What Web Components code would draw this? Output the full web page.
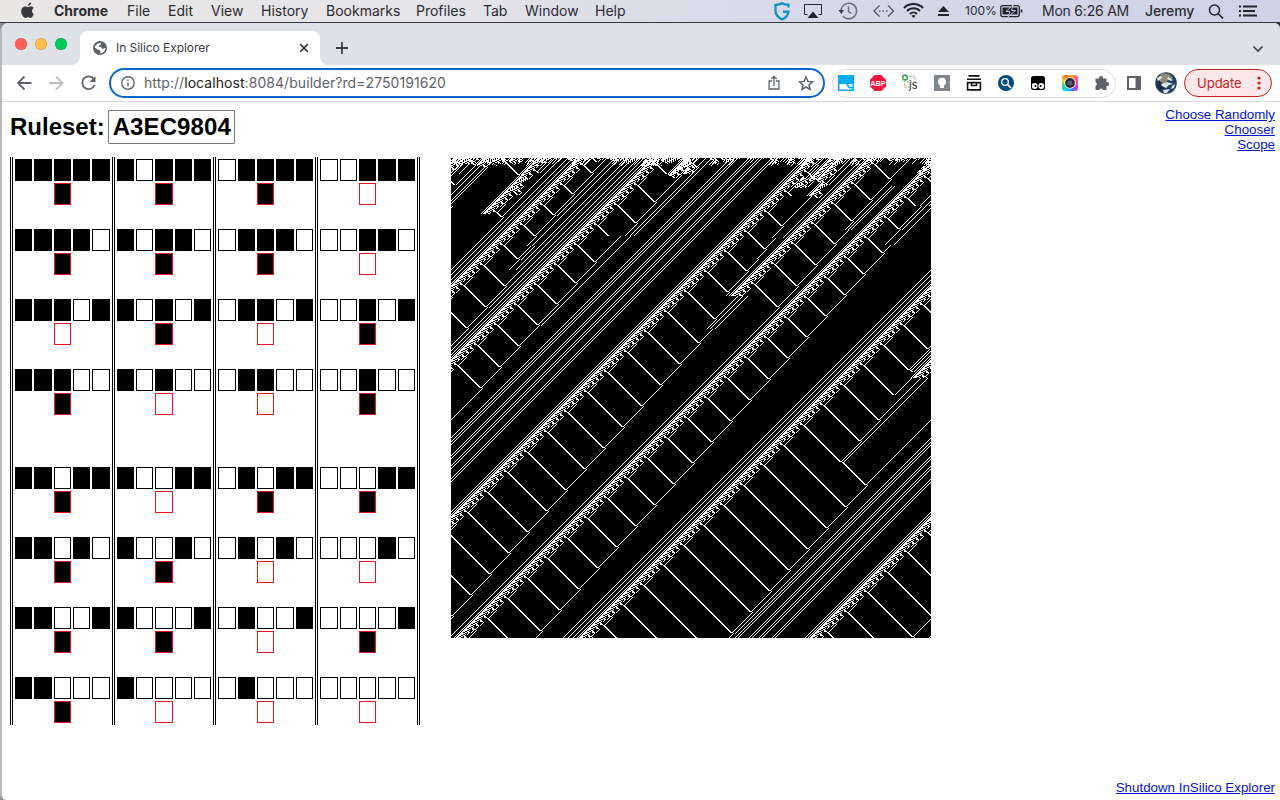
<!DOCTYPE html>
<html lang="en">
<head>
<meta charset="utf-8">
<title>In Silico Explorer</title>
<style>
html,body{margin:0;height:100%;overflow:hidden;background:#fff}
</style>
</head>
<body>
<desk-top></desk-top>
<script>
const define = (name, html, init) => {
  const tpl = document.createElement('template');
  tpl.innerHTML = html;
  customElements.define(name, class extends HTMLElement {
    constructor() {
      super();
      this.attachShadow({ mode: 'open' }).append(tpl.content.cloneNode(true));
    }
    connectedCallback() { if (init && !this.ready) { this.ready = true; init(this, this.shadowRoot); } }
  });
};

/* ---------- five-neighbour cellular automaton ---------- */
const RULE = 0xA3EC9804, SIZE = 480;
const mod = (a, n) => ((a % n) + n) % n;
const step = a => {
  const n = a.length, b = new Uint8Array(n);
  for (let i = 0; i < n; i++) {
    const v = a[(i + n - 2) % n] << 4 | a[(i + n - 1) % n] << 3 | a[i] << 2 | a[(i + 1) % n] << 1 | a[(i + 2) % n];
    b[i] = (RULE >>> v) & 1;
  }
  return b;
};

define('menu-bar', `
<style>
:host{display:flex;box-sizing:border-box;height:23px;padding-left:20px;border-bottom:1px solid #33343c;
 background:linear-gradient(90deg,#e9e7e6,#e4e3e7 35%,#d8d9e9 60%,#cdd2e6);font:14px/22px Inter,sans-serif;color:#2b2b33;white-space:nowrap}
span{display:block;flex:none}
svg{display:block;flex:none}
b{font-weight:700}
</style>
<svg width="34" height="22" viewBox="0 0 34 22"><path fill="#38383d" d="M11.2 2.600c.1 1.700-1.400 3.300-3.100 3.300-.2-1.600 1.400-3.200 3.100-3.300zM13.800 14c-.5 1.500-2 3.900-3.300 3.900-1 0-1.400-.6-2.500-.6s-1.500.6-2.400.6C3.600 17.900 1.200 14.400 1.200 11.200c0-3 1.900-4.700 3.800-4.700 1.200 0 2 .7 2.900.7.800 0 1.800-.8 3.200-.7.800 0 2 .4 2.700 1.500-2.600 1.600-2.100 4.900 0 6z"/></svg>
<span style="width:73px"><b>Chrome</b></span><span style="width:41px">File</span><span style="width:43px">Edit</span><span style="width:50px">View</span><span style="width:65px">History</span><span style="width:90px">Bookmarks</span><span style="width:67px">Profiles</span><span style="width:42px">Tab</span><span style="width:70px">Window</span><span style="width:178px">Help</span>
<svg width="507" height="22" viewBox="773 0 507 22" fill="none" stroke="#23242c" style="margin-right:-507px">
 <path d="M788.500 7.500V5q-4-.3-6.500-1.800Q779.500 4.700 775.500 5v6c0 4 3 6.500 6.500 8.500 3.500-1.800 6.300-4 6.500-7.800h-5.500" stroke="#1492c4" stroke-width="2.400"/>
 <path d="M807.500 14.500h-3v-10h17v10h-3"/><path fill="#23242c" stroke="none" d="M813 11.500l5.500 6.500h-11z"/>
 <g stroke="#6b6e7b" stroke-width="1.500"><path d="M841 11a7.800 7.800 0 1 1 1.800 5"/><path d="M848.500 6.500v5l3 2"/></g><path fill="#3b3d48" stroke="none" d="M838.500 10h5.500l-2.700 4z"/>
 <g stroke="#555865" stroke-width="1.300"><path d="M879.500 5.500l-5.500 5.500 5.500 5.500M888 5.500l5.500 5.500-5.500 5.500"/><path stroke-dasharray="1.500 2" d="M879 11h10"/></g>
 <g stroke-width="2"><path d="M904 8a13.500 13.500 0 0 1 19 0M907 11a9 9 0 0 1 13 0M910 14a5 5 0 0 1 7 0"/></g><path fill="#23242c" stroke="none" d="M913.500 18l-2-2.200a3 3 0 0 1 4 0z"/>
 <path fill="#23242c" stroke="none" d="M943.500 6l5.500 6h-11zM938 14h11v2h-11z"/>
 <rect x="1000.800" y="5.600" width="18.500" height="11" rx="2" stroke-width="1.300"/><rect x="1002.500" y="7.500" width="15" height="7" fill="#23242c" stroke="none"/><path d="M1021.500 9.500v3" stroke-width="1.600"/><path d="M1013 5l-7 6.500h4l-2 5.500 7.500-6.500h-4z" fill="#23242c" stroke="#d0d4e6" stroke-width=".9"/>
 <circle cx="1214.500" cy="10" r="5" stroke-width="1.500"/><path d="M1218 13.500l5 5" stroke-width="1.700"/>
 <path d="M1243 6.500h14M1243 11h12M1243 15.500h14" stroke-width="2"/><path d="M1239 6.500h2M1239 11h2M1239 15.500h2" stroke-width="2"/>
</svg>
<span style="width:77px;margin-left:192px;font-size:12px">100%</span><span style="width:103px;letter-spacing:-.22px">Mon 6:26 AM</span><span style="font-weight:500;letter-spacing:-.1px">Jeremy</span>
`);

define('tab-strip', `
<style>
:host{display:flex;box-sizing:border-box;height:42px;padding:8px 16px 0 13px;background:#dee1e6;font:12px/34px Inter,sans-serif;color:#3c4043}
i{display:block;flex:none;width:12px;height:12px;border-radius:50%;margin:7px 8px 0 0;box-shadow:inset 0 0 0 .5px #0003}
.tab{display:flex;align-items:center;position:relative;width:240px;height:34px;margin-left:5px;border-radius:8px 8px 0 0;background:#fff;flex:none}
.tab::before,.tab::after{content:"";position:absolute;bottom:0;width:8px;height:8px}
.tab::before{left:-8px;background:radial-gradient(circle at 0 0,#0000 7.500px,#fff 8px)}
.tab::after{right:-8px;background:radial-gradient(circle at 100% 0,#0000 7.500px,#fff 8px)}
.tab span{width:181px;letter-spacing:-.05px}
svg{display:block;flex:none}
.tab svg:first-child{margin:0 9px 0 13px}
</style>
<i style="background:#ff5f57"></i><i style="background:#ffbd4c"></i><i style="background:#00ca56"></i>
<div class="tab"><svg width="14" height="14" viewBox="0 0 14 14"><circle cx="7" cy="7" r="7" fill="#5f6368"/><path d="M6.500 2.200c2.500-.8 1.500 1.600 0 2-1.500.3-.5 1.700 1 1.700 1.300 0 1 2 2.300 1.900.9 0 1-1 2.700-.8-.2 3-2.800 5.300-5.200 5.400-.6-1.200.7-1.700-.3-2.800-1-1-2.600-.7-3.600-1.900L1.700 6.500C2 4.200 4 2.500 6.500 2.200z" fill="#fff"/></svg><span>In Silico Explorer</span><svg width="14" height="14" viewBox="0 0 14 14"><path d="M3.200 3.200l7.600 7.600M10.800 3.200l-7.600 7.600" stroke="#3c4043" stroke-width="1.700"/></svg></div>
<svg width="14" height="14" viewBox="0 0 14 14" style="margin:10px 0 0 15px"><path d="M7 1v12M1 7h12" stroke="#3c4043" stroke-width="1.800"/></svg>
<svg width="12" height="12" viewBox="0 0 12 12" style="margin:12px 0 0 auto"><path d="M1.500 3.500L6 8l4.500-4.500" fill="none" stroke="#3c4043" stroke-width="1.600"/></svg>
`);

define('tool-bar', `
<style>
:host{display:flex;box-sizing:border-box;height:37px;align-items:center;border-bottom:1px solid #d5d7da;background:#fff;font:14px/26px Inter,sans-serif;color:#5f6368;padding:0 8px 0 14px}
svg{display:block;flex:none}
.omni{display:flex;align-items:center;box-sizing:border-box;width:716px;height:30px;border:2px solid #0b66cf;border-radius:15px;margin-left:11px;flex:none;padding:0 8px 0 10px}
.omni span{flex:1;margin-left:9px;letter-spacing:.06px}
em{font-style:normal;color:#202124}
.ext{display:flex;align-items:center;box-sizing:border-box;width:284px;height:29px;border:1px solid #dadce0;border-radius:15px;margin-left:7px;padding:0 5px;gap:16px;flex:none}
.upd{display:flex;align-items:center;box-sizing:border-box;width:88px;height:28px;border:1px solid #c5221f;border-radius:14px;background:#fce8e9;color:#c5221f;font-size:13px;margin-left:7px;padding-left:12px;flex:none}
</style>
<svg width="82" height="18" viewBox="16 74 82 18" fill="none" stroke="#5f6368" stroke-width="1.800"><path d="M31.500 83H18.500M24.500 76.500L18 83l6.500 6.500"/><path stroke="#bcbec1" d="M49 83h13M56 76.500l6.500 6.500-6.500 6.500"/><path d="M94 79.500a6.300 6.300 0 1 0 .5 5.500"/><path fill="#5f6368" stroke="none" d="M95.500 76v6h-6z"/></svg>
<div class="omni"><svg width="14" height="14" viewBox="0 0 14 14" fill="none" stroke="#5f6368" stroke-width="1.400"><circle cx="7" cy="7" r="6.200"/><path d="M7 6.200v4M7 3.500v1.500"/></svg><span>http://<em>localhost</em>:8084/builder?rd=2750191620</span>
<svg width="48" height="18" viewBox="767 74 48 18" fill="none" stroke="#5f6368" stroke-width="1.300"><path d="M772 81h-2.900v8h9.800v-8H776M774 86v-9M771.300 79l2.700-2.700 2.700 2.700"/><path stroke-width="1.500" d="M806 77l1.900 4.400 4.600.4-3.500 3.100 1.100 4.600-4.100-2.500-4.100 2.500 1.100-4.600-3.500-3.100 4.600-.4z"/></svg></div>
<div class="ext">
<svg width="16" height="16"><path fill="#00aeef" d="M0 0h16v16H0z"/><path fill="#fff" d="M1.500 9h6c1.500 0 1.500 4.500 4.500 4.500h2.500v1h-13zM9.500 9h5v3h-2c-1.500 0-1.500-3-3-3z"/></svg>
<svg width="16" height="16"><path fill="#f1143f" d="M4.700 0h6.600L16 4.700v6.600L11.300 16H4.700L0 11.300V4.700z"/><text x="8" y="10.800" font-family="Liberation Sans" font-weight="700" font-size="7.400" fill="#fff" text-anchor="middle">ABP</text></svg>
<svg width="18" height="18" style="margin-right:-2px"><g fill="none" stroke="#b4b6b8" stroke-dasharray="2 1.500" stroke-width="1.500"><path d="M7 2.500h6v5M2.500 6v7h5M5 8h5v3"/></g><circle cx="3" cy="3.500" r="2.400" fill="none" stroke="#43a857" stroke-width="1.600"/><text x="7" y="14.500" font-family="Inter" font-size="11" fill="#333">js</text></svg>
<svg width="16" height="16"><path fill="#80868b" d="M0 0h16v16H0z"/><circle cx="8" cy="6.800" r="4" fill="#fff"/><path fill="#fff" d="M6 10h4v3H6z"/></svg>
<svg width="16" height="16" fill="none" stroke="#111" stroke-width="1.600"><path d="M2.500.9h11M1 4.200h14M1.600 7.600h12.800v7.300H1.600zM5.500 8v2.500h5V8"/></svg>
<svg width="16" height="16"><circle cx="8" cy="8" r="8" fill="#02497c"/><circle cx="7" cy="7" r="3.300" fill="none" stroke="#fff" stroke-width="1.300"/><path d="M9.500 9.500l3.500 3.500" stroke="#fff" stroke-width="1.700"/></svg>
<svg width="16" height="16"><rect x="1" y="1" width="14" height="14" rx="2.500" fill="#000"/><circle cx="4.700" cy="11" r="2.900" fill="#fff"/><circle cx="11.300" cy="11" r="2.900" fill="#fff"/><circle cx="5.400" cy="11" r="1" /><circle cx="10.600" cy="11" r="1"/></svg>
<svg width="16" height="16"><foreignObject width="16" height="16"><div style="width:16px;height:16px;border-radius:3px;background:conic-gradient(#ffb300,#ff4fa0,#c63cff 35%,#3a7bff 45%,#17d3e0 60%,#3ddc6b 72%,#d8e02a 80%,#ff5a3c 92%,#ffb300)"></div></foreignObject><circle cx="8" cy="8" r="5.800" fill="#fff"/><circle cx="8" cy="8" r="4.900" fill="#2a2a2e"/><circle cx="8" cy="8" r="2.600" fill="#56606c"/></svg>
<svg width="16" height="16"><path fill="#5f6368" d="M1.500 3.500h3.700a2 2 0 1 1 3.800 0h3.500v3.700a2 2 0 1 1 0 3.800V15H9.200a2 2 0 0 0-3.900 0H1.500v-4a2 2 0 0 0 0-3.800z"/></svg>
</div>
<svg width="14" height="14" style="margin-left:11px"><path fill="#5f6368" fill-rule="evenodd" d="M0 0h14v14H0zM2 2v10h6.500V2z"/></svg>
<svg width="22" height="22" style="margin-left:14px"><defs><clipPath id="e"><circle cx="11" cy="11" r="10.800"/></clipPath></defs><g clip-path="url(#e)"><path fill="#24405f" d="M0 0h22v22H0z"/><path fill="#8f8a78" d="M7 1l7 1 4 4-5 2-3 4-4-1-3-5z"/><path fill="#1c2f46" d="M3 9l5 2 3 5-4 3-5-3z"/><path fill="#dfe6ea" d="M2 6l4-2 1 2-4 3zM6 12l6-2 6 2-4 1-3 3-4-2zM8 18l7-1-3 4H9zM13 5l5 3-2 1-4-2zM17 14l3-2-1 4-3 1z"/></g></svg>
<div class="upd">Update<svg width="4" height="16" style="margin-left:15px" fill="#c5221f"><circle cx="2" cy="3" r="1.600"/><circle cx="2" cy="8" r="1.600"/><circle cx="2" cy="13" r="1.600"/></svg></div>
`);

define('rule-table', `
<style>
:host{display:flex;height:568px;border-right:3px double #000;width:407px}
.col{box-sizing:border-box;border-left:3px double #000;padding:2px 0 0 2px}
.rule{height:70px;display:grid;grid-template-rows:22px 22px;row-gap:2px;column-gap:2px;align-content:start}
.rule.gap{margin-bottom:28px}
i{display:block;box-sizing:border-box;border:1px solid #000}
.on{background:#000}
.out{grid-row:2;grid-column:3;border-color:#f1111c}
</style>`, (host, root) => {
  const cols = [
    { w: 102, tracks: '17px 18px 17px 17px 18px' },
    { w: 101, tracks: '17px 17px 18px 17px 17px' },
    { w: 102, tracks: '18px 17px 17px 18px 17px' },
    { w: 102, tracks: '18px 17px 17px 18px 17px' }];
  cols.forEach((c, k) => {
    const col = document.createElement('div');
    col.className = 'col';
    col.style.width = c.w + 'px';
    for (let r = 0; r < 8; r++) {
      const v = k * 8 + r, row = document.createElement('div');
      row.className = 'rule' + (r === 3 ? ' gap' : '');
      row.style.gridTemplateColumns = c.tracks;
      for (let b = 4; b >= 0; b--) row.innerHTML += `<i class="${v >> b & 1 ? '' : 'on'}"></i>`;
      row.innerHTML += `<i class="out ${RULE >>> v & 1 ? '' : 'on'}"></i>`;
      col.append(row);
    }
    root.append(col);
  });
});

define('automaton-view', `
<style>:host{display:block;width:480px;height:480px}canvas{display:block;background:#000}</style>
<canvas width="480" height="480"></canvas>`, (host, root) => {
  const g = root.querySelector('canvas').getContext('2d');
  // Everything but the emitted pairs drifts left one cell per row, so objects
  // are placed by their drift column u = x + row.
  const CORE = '10111100100001';
  // emitters: drift column, diagonal of their pairs (mod 40), leading cells
  const guns = [[356, 22, 3], [482, 16], [125, 5, 4], [199, 39], [415, 17], [30, 10], [84, 8], [232, 36], [384, 20]];
  const singles = [97, 103, 109, 116, 155, 163, 168, 176, 181, 187, 192, 196, 254, 260, 279, 283, 286, 297, 300, 307, 310, 320, 323, 404, 411, 459];
  // [row, from, to, singles set, clear everything instead of lone cells]
  const events = [
    [28, 440, 476, [461, 468, 471], 1], [38, 376, 400, [398], 1], [48, 20, 64, [38, 42, 49], 1], [56, 76, 95, [], 1],
    [72, 454, 476, [469]], [78, 224, 264, [247, 257], 1], [88, 150, 178, [167, 171, 176]], [87, 28, 62, [46]],
    [80, 396, 412, [404]], [101, 396, 412, [408]], [112, 155, 184, [181]], [137, 176, 190, [183, 187]],
    [138, 410, 441, [424, 429, 434], 1], [171, 418, 441, [432]], [220, 180, 222, [200, 209, 216], 1]];
  const starts = {};
  for (const [u, d, lead] of guns) {
    const t = mod((u + 30 - d) / 2, 20) - 20;
    (starts[t] ||= []).push([u, lead]);
  }
  let seed = 21;
  const rnd = () => (seed = (seed * 1103515245 + 12345) & 0x7fffffff) >> 16 & 1;
  let w = new Uint8Array(SIZE), n = new Uint8Array(SIZE).map(rnd);
  // depth of the disordered start, per drift column
  const depth = u => (u < 26 ? 16 : u > 196 && u < 212 ? 8 : u > 236 && u < 256 ? 16 : u > 370 && u < 386 ? 30 : u > 424 && u < 442 ? 26 : 4 + mod(u * 7, 5));
  g.fillStyle = '#fff';
  for (let t = -20; t < SIZE; t++) {
    for (const [u, lead] of starts[t] || []) {
      [...CORE].forEach((c, i) => w[mod(u - t + i, SIZE)] = +c);
      if (lead) w[mod(u - t - lead, SIZE)] = 1;
    }
    if (t === 0) for (const u of singles) w[u] = 1;
    for (const [row, from, to, set, all] of events) {
      if (row !== t) continue;
      const o = w.slice();
      for (let u = from; u <= to; u++) {
        const x = mod(u - t, SIZE);
        if (all || (!o[mod(x - 1, SIZE)] && !o[mod(x + 1, SIZE)])) w[x] = 0;
      }
      for (const u of set) w[mod(u - t, SIZE)] = 1;
    }
    if (t >= 0) {
      for (let x = 0; x < SIZE; x++) if (w[x] || (n[x] && t < depth(mod(x + t, SIZE)))) g.fillRect(x, t, 1, 1);
      n = step(n);
    }
    w = step(w);
  }
});

define('desk-top', `
<style>
:host{display:flex;flex-direction:column;box-sizing:border-box;width:1280px;height:800px;background:linear-gradient(90deg,#8a8c90,#2b3350);font-family:"Liberation Sans",Arial,sans-serif;overflow:hidden}
.win{display:flex;flex-direction:column;flex:1;box-sizing:border-box;border-left:2px solid #b9b9bb;border-radius:8px 6px 0 6px;background:#fff;overflow:hidden}
.page{flex:1;display:flex;flex-direction:column;padding:8px 5px 5px 8px}
.head{display:flex;justify-content:space-between;height:47px}
h2{margin:0;font-size:24px;line-height:34px;display:flex;gap:3px}
h2 span{box-sizing:border-box;width:127px;height:34px;border:1px solid #767676;padding-left:4px;line-height:31px;border-radius:1px;letter-spacing:.1px}
nav{display:flex;flex-direction:column;align-items:flex-end;margin-top:-3px}
a{color:#0414d8;text-decoration:underline;font-size:13.333px;line-height:15px}
.main{display:flex;gap:31px}
automaton-view{margin-top:1px}
.foot{margin-top:auto;text-align:right;line-height:15px}
</style>
<menu-bar></menu-bar>
<div class="win"><tab-strip></tab-strip><tool-bar></tool-bar>
<div class="page">
<div class="head"><h2>Ruleset: <span>A3EC9804</span></h2><nav><a>Choose Randomly</a><a>Chooser</a><a>Scope</a></nav></div>
<div class="main"><rule-table></rule-table><automaton-view></automaton-view></div>
<div class="foot"><a>Shutdown InSilico Explorer</a></div>
</div></div>
`);
</script>
</body>
</html>
